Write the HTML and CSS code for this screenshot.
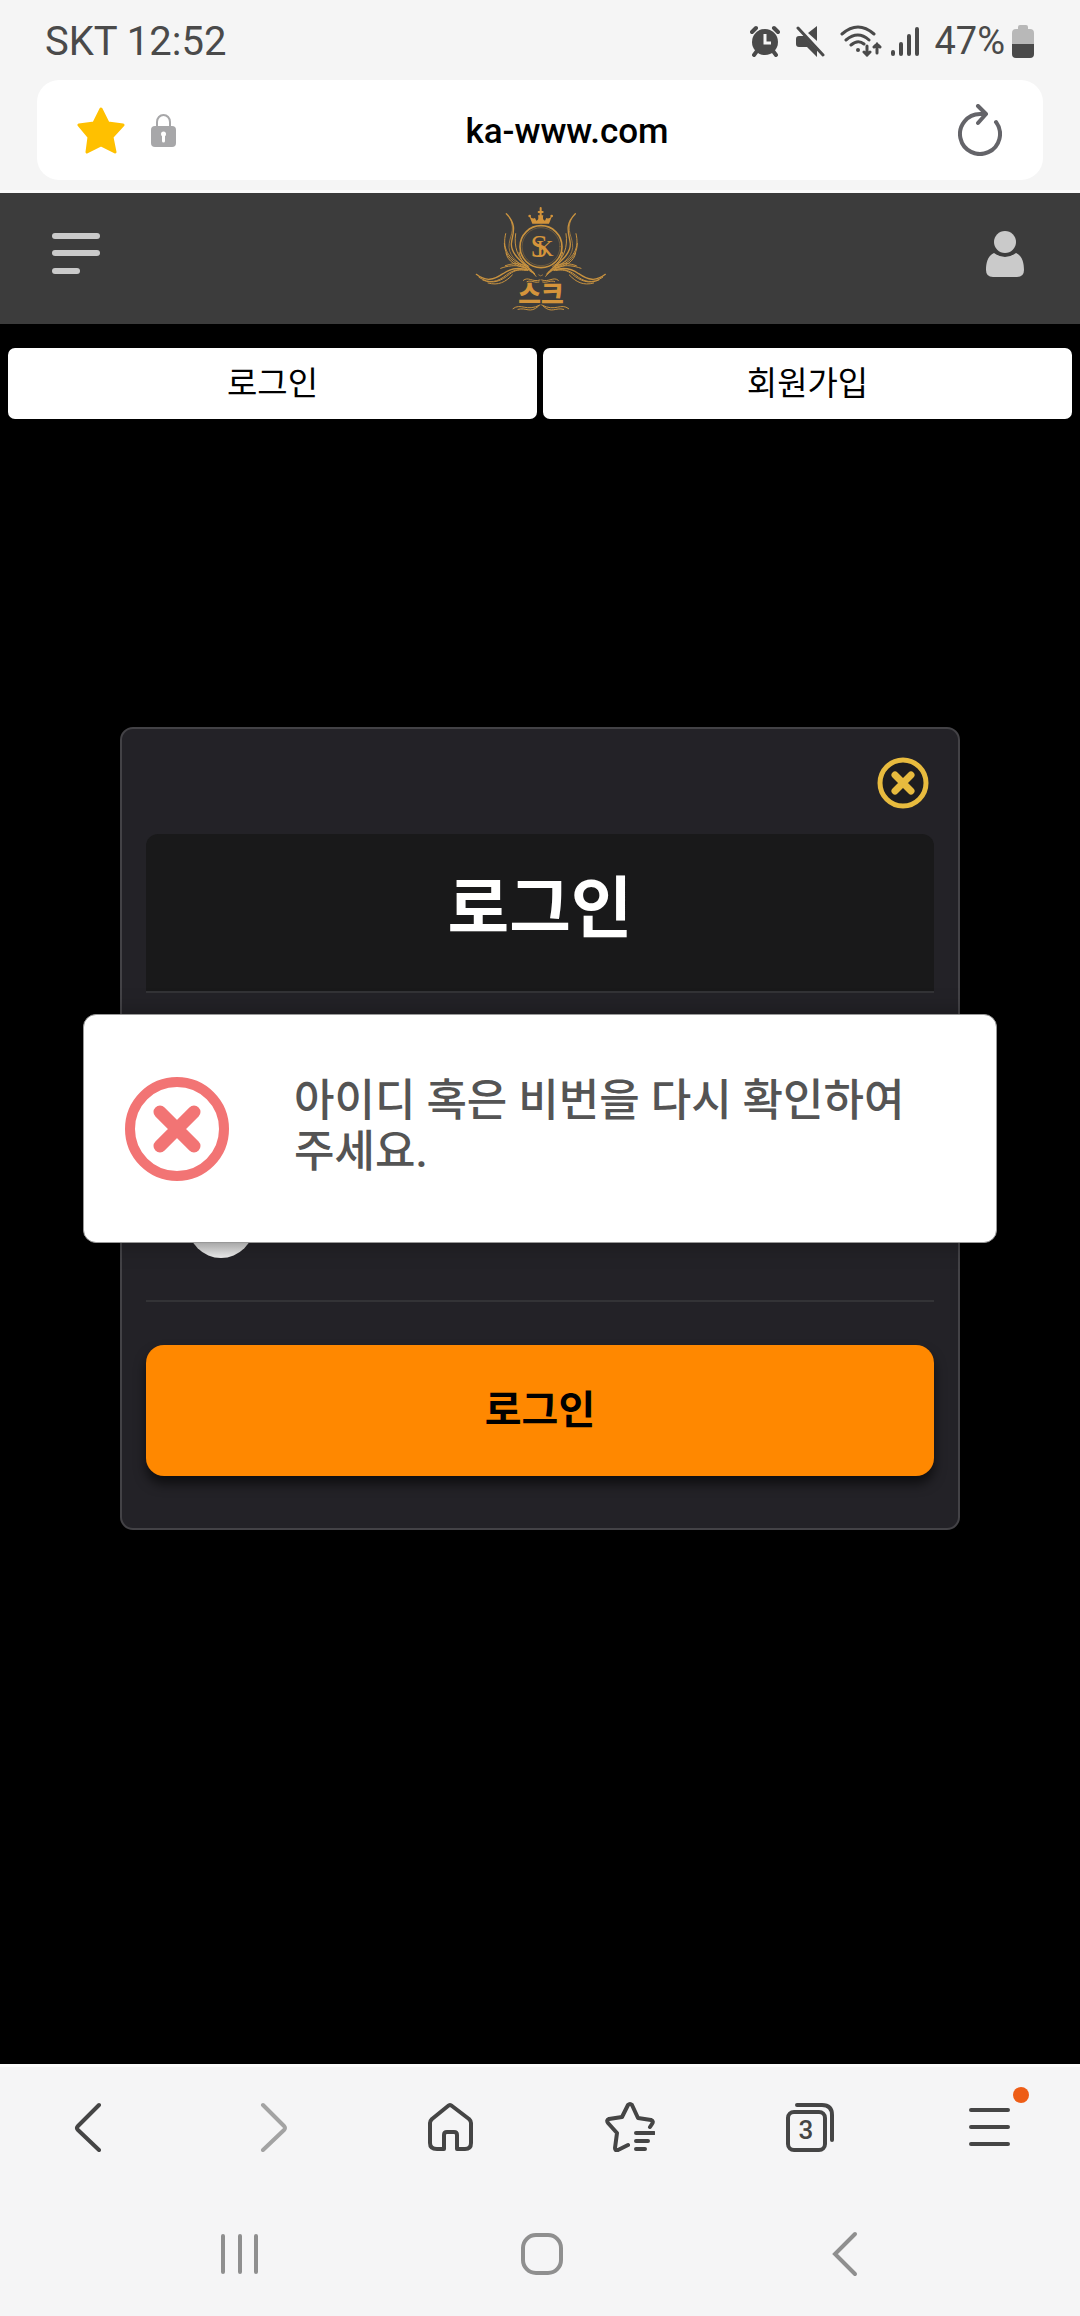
FILE: index.html
```html
<!DOCTYPE html>
<html lang="ko">
<head>
  <meta charset="UTF-8">
  <meta name="viewport" content="width=device-width, initial-scale=1.0">
  <title>ka-www.com</title>
  <link rel="stylesheet" href="styles.css">
</head>
<body>
  <div class="browser-top">
    <div class="status-bar">
      <span class="clock">SKT 12:52</span>
      <div class="status-icons">
        <!-- Alarm -->
        <svg width="30" height="32" viewBox="0 0 30 32" fill="none" stroke="#4a4a4a">
          <circle cx="15" cy="17" r="13" fill="#4a4a4a" stroke="none"/>
          <path d="M2 7l4-4M28 7l-4-4M4 30l3-4M26 30l-3-4" stroke-width="4" stroke-linecap="round"/>
          <path d="M15 9v9h6" stroke="#f5f5f5" stroke-width="3"/>
        </svg>
        <!-- Mute -->
        <svg width="30" height="32" viewBox="0 0 30 32" fill="#4a4a4a">
          <path d="M4 11h5l13 14v7l-10-10H4a3 3 0 0 1-3-3v-5a3 3 0 0 1 3-3zM13 8l9-7v15z"/>
          <path d="M3 3l25 27" stroke="#4a4a4a" stroke-width="3" stroke-linecap="round"/>
        </svg>
        <!-- Wifi -->
        <svg class="wifi" width="42" height="32" viewBox="0 0 42 32" fill="none" stroke="#4a4a4a" stroke-width="3" stroke-linecap="round">
          <path d="M2 9Q18-5 34 9M6 15q12-10 23 0M11 20q7-6 13-1"/>
          <circle cx="18" cy="25" r="2" fill="#4a4a4a" stroke="none"/>
          <path d="M27 21v9M24 27l3 3 3-3M37 28v-9M34 22l3-3 3 3" stroke-width="3"/>
        </svg>
        <!-- Signal -->
        <svg width="28" height="32" viewBox="0 0 28 32" stroke="#4a4a4a" stroke-width="4" stroke-linecap="round">
          <path d="M2 27v2M10 19v10M18 11v18M26 4v25"/>
        </svg>
        <span class="battery-text">47%</span>
        <!-- Battery -->
        <svg width="22" height="34" viewBox="0 0 22 34">
          <path d="M6 5V3q0-2 2-2h6q2 0 2 2v2h2q4 0 4 4v12H0V9q0-4 4-4z" fill="#b8b8b8"/>
          <path d="M0 20h22v10q0 4-4 4H4q-4 0-4-4z" fill="#4a4a4a"/>
        </svg>
      </div>
    </div>

    <div class="address-bar">
      <button class="icon-btn" aria-label="즐겨찾기">
        <svg width="48" height="48" viewBox="0 0 48 48">
          <path d="M24 3l7 14 15 2-11 12 3 15-14-7-14 7 2-15L2 19l15-2z" fill="#ffc000" stroke="#ffc000" stroke-width="3" stroke-linejoin="round"/>
        </svg>
      </button>
      <svg width="25" height="34" viewBox="0 0 25 34">
        <path d="M6 15V9a6.500 7 0 0 1 13 0v6" fill="none" stroke="#a7a7a9" stroke-width="2"/>
        <rect x="0" y="13" width="25" height="21" rx="4" fill="#a7a7a9"/>
        <circle cx="12.500" cy="21" r="2.500" fill="#fff"/>
        <path d="M12.500 21v7" stroke="#fff" stroke-width="3" stroke-linecap="round"/>
      </svg>
      <span class="url">ka-www.com</span>
      <button class="icon-btn" aria-label="새로고침">
        <svg width="44" height="52" viewBox="0 0 44 52" fill="none" stroke="#646469" stroke-width="4" stroke-linecap="round" stroke-linejoin="round">
          <path d="M38 18A20 20 0 1 1 22 10L28 10M20 2l8 8-8 9"/>
        </svg>
      </button>
    </div>
  </div>

  <div class="page">
    <header class="site-header">
      <button class="icon-btn" aria-label="메뉴">
        <svg width="48" height="42" viewBox="0 0 48 42" fill="#cacaca">
          <rect width="48" height="6" rx="3"/>
          <rect y="17" width="48" height="6" rx="3"/>
          <rect y="35" width="28" height="6" rx="3"/>
        </svg>
      </button>
      <a href="#" class="logo" aria-label="스크">
        <svg width="160" height="125" viewBox="0 0 480 375" fill="none" stroke="#c8923f" stroke-linecap="round">
          <!-- Crown -->
          <path d="M217 83l-10-25q9 13 18 8l4 8q9-2 5-16h16q-4 14 5 16l4-8q9 5 18-8l-10 25z" fill="#d4943b" stroke="none"/>
          <path d="M242 36v38M236 48h12" stroke="#d4943b" stroke-width="6"/>
          <circle cx="209" cy="60" r="4" fill="#d4943b" stroke="none"/>
          <circle cx="275" cy="60" r="4" fill="#d4943b" stroke="none"/>
          <!-- Ring -->
          <circle cx="243" cy="152" r="63" stroke-width="5"/>
          <circle cx="243" cy="152" r="57" stroke-width="1"/>
          <text class="logo-mark" x="211" y="184">S<tspan class="logo-k" dx="-36" dy="-4">K</tspan></text>
          <!-- Wings -->
          <g id="wing" stroke-width="4">
            <path d="M139 53c36 36 17 63 15 91 0 35 36 55 70 91"/>
            <path d="M151 68c17 40-5 52-4 87 4 32 30 46 68 74" stroke-width="2"/>
            <path d="M137 113c-10 41 2 76 63 99M133 142c0 38 26 61 66 73M138 171c5 26 30 39 60 46" stroke-width="3"/>
            <path d="M167 113c-6 39 5 76 40 99M177 169c4 22 18 36 31 49" stroke-width="3"/>
            <path d="M122 217c45-17 84-6 106 24M136 209c40-14 66-4 88 24" stroke-width="3"/>
            <path d="M49 235c29 23 52 17 80-2 25-18 49-19 74-11"/>
            <path d="M57 244c32 21 56 14 82-7 20-16 39-19 64-14M68 252c31 14 57 2 80-17 16-13 31-15 48-12M84 261c31 9 53-3 73-24" stroke-width="3"/>
            <path d="M190 253c15-13 27 7 50-1M201 257c12-6 23 5 36 1M159 338c24-19 39 11 81-11M174 340c26-7 35 14 61-9" stroke-width="3"/>
          </g>
          <use href="#wing" transform="matrix(-1 0 0 1 485 0)"/>
          <path d="M236 237q6 6 12 0" stroke-width="2"/>
          <text class="logo-name" x="243" y="322" text-anchor="middle">스크</text>
        </svg>
      </a>
      <button class="icon-btn" aria-label="내 정보">
        <svg width="38" height="46" viewBox="0 0 38 46" fill="#cacaca">
          <ellipse cx="19" cy="11" rx="11" ry="11"/>
          <path d="M8 22q11 8 22 0c6 3 8 9 8 17q0 7-7 7H7q-7 0-7-7c0-8 2-14 8-17z"/>
        </svg>
      </button>
    </header>

    <nav class="member-links">
      <a href="#">로그인</a>
      <a href="#">회원가입</a>
    </nav>

    <div class="overlay">
      <form class="login-modal">
        <button type="button" class="icon-btn close-btn" aria-label="닫기">
          <svg width="52" height="52" viewBox="0 0 52 52" fill="none" stroke="#e8bb3e">
            <circle cx="26" cy="26" r="23" fill="#1e1d1f" stroke-width="5"/>
            <path d="M18 18l16 16M34 18L18 34" stroke-width="7" stroke-linecap="round"/>
          </svg>
        </button>
        <h1>로그인</h1>
        <div class="login-fields">
          <input type="checkbox" class="save-check" aria-label="아이디 저장">
        </div>
        <button type="button" class="login-btn">로그인</button>
      </form>
    </div>

    <div class="overlay">
      <div class="toast" role="alert">
        <svg width="106" height="106" viewBox="0 0 106 106" fill="none" stroke="#f27474">
          <circle cx="53" cy="53" r="47" stroke-width="10"/>
          <path d="M36 36l34 34M70 36L36 70" stroke-width="13" stroke-linecap="round"/>
        </svg>
        <p>아이디 혹은 비번을 다시 확인하여 주세요.</p>
      </div>
    </div>
  </div>

  <div class="browser-bottom">
    <nav class="toolbar">
      <button class="icon-btn" aria-label="이전">
        <svg width="50" height="50" viewBox="0 0 50 50"><path d="M34 3L13 24q-2 2 0 4l21 20"/></svg>
      </button>
      <button class="icon-btn" aria-label="다음" disabled>
        <svg width="50" height="50" viewBox="0 0 50 50"><path d="M18 3l21 21q2 2 0 4L18 48"/></svg>
      </button>
      <button class="icon-btn" aria-label="홈">
        <svg width="50" height="50" viewBox="0 0 50 50" stroke-linejoin="round">
          <path d="M23 4q2-2 4 0l17 13q2 2 2 4v20q0 6-6 6h-8V33q0-3-3-3h-7q-3 0-3 3v14h-7q-7 0-7-6V21q0-2 2-4z"/>
        </svg>
      </button>
      <button class="icon-btn" aria-label="북마크">
        <svg width="50" height="50" viewBox="0 0 50 50" stroke-linejoin="round">
          <path d="M23 43l-10 5q-3 1-3-2l2-15L3 21q-2-3 1-4l13-2 6-12q2-2 4 0l6 13 13 2q3 1 1 4l-2 3M31 31h18M31 39h12M31 47h9"/>
        </svg>
      </button>
      <button class="icon-btn tabs-btn" aria-label="탭">
        <svg width="50" height="50" viewBox="0 0 50 50">
          <rect x="3" y="10" width="37" height="38" rx="6"/>
          <path d="M12 3h25q10 0 10 10v25"/>
        </svg>
        <span class="tab-count">3</span>
      </button>
      <button class="icon-btn menu-btn" aria-label="더보기">
        <svg width="50" height="50" viewBox="0 0 50 50"><path d="M6 8h37M6 25h37M6 42h37"/></svg>
        <span class="menu-dot"></span>
      </button>
    </nav>
    <nav class="system-nav">
      <button class="icon-btn" aria-label="최근 앱">
        <svg width="50" height="50" viewBox="0 0 50 50"><path d="M8 7v36M25 7v36M41 7v36"/></svg>
      </button>
      <button class="icon-btn" aria-label="홈 화면">
        <svg width="50" height="50" viewBox="0 0 50 50"><rect x="8" y="6" width="38" height="38" rx="13"/></svg>
      </button>
      <button class="icon-btn" aria-label="뒤로">
        <svg width="50" height="50" viewBox="0 0 50 50"><path d="M40 5L20 25l20 20"/></svg>
      </button>
    </nav>
  </div>
</body>
</html>
```

FILE: styles.css
```css
* {
  box-sizing: border-box;
}

body {
  margin: 0;
  min-height: 100vh;
  display: flex;
  flex-direction: column;
  background: #000;
  font-family: Roboto, 'Noto Sans CJK KR', sans-serif;
}

svg {
  display: block;
  flex-shrink: 0;
}

.icon-btn {
  padding: 0;
  border: none;
  background: none;
  cursor: pointer;
}

/* Status bar and address bar */
.browser-top {
  background: #f5f5f5;
  border-bottom: 3px solid #fcfcfc;
  padding-bottom: 10px;
}

.status-bar {
  display: flex;
  justify-content: space-between;
  align-items: center;
  height: 80px;
  padding: 2px 46px 0 45px;
  color: #4a4a4a;
}

.clock {
  font-size: 40px;
}

.status-icons {
  display: flex;
  align-items: center;
  gap: 15px;
}

.wifi {
  margin-right: -6px;
}

.battery-text {
  font-size: 38px;
  margin-right: -8px;
}

.address-bar {
  display: flex;
  align-items: center;
  gap: 26px;
  min-height: 100px;
  margin: 0 37px;
  padding: 0 41px 0 40px;
  border-radius: 22px;
  background: #fff;
}

.url {
  flex: 1;
  padding-top: 2px;
  text-align: center;
  font-size: 35px;
  font-weight: 500;
  color: #000;
}

/* Site */
.page {
  flex: 1;
  position: relative;
}

.site-header {
  display: flex;
  justify-content: space-between;
  align-items: center;
  height: 131px;
  padding: 0 56px 0 52px;
  background: #3c3c3c;
}

.site-header .icon-btn {
  padding-bottom: 10px;
}

.logo {
  margin-right: 6px;
}

.logo-mark {
  fill: #d4943b;
  stroke: none;
  font-family: 'Liberation Serif', serif;
  font-size: 96px;
}

.logo-k {
  font-size: 72px;
}

.logo-name {
  fill: #d4943b;
  stroke: none;
  font-family: 'Noto Sans CJK KR', sans-serif;
  font-size: 74px;
  font-weight: 900;
}

.member-links {
  display: flex;
  gap: 6px;
  padding: 24px 8px;
}

.member-links a {
  flex: 1;
  border-radius: 7px;
  background: #fff;
  color: #000;
  font-size: 33px;
  line-height: 71px;
  text-align: center;
  text-decoration: none;
}

.overlay {
  position: absolute;
  inset: 0;
  display: flex;
  justify-content: center;
  align-items: center;
}

/* Login modal */
.login-modal {
  display: flex;
  flex-direction: column;
  width: calc(100% - 240px);
  padding: 28px 24px 52px;
  border: 2px solid #434246;
  border-radius: 13px;
  background: #232227;
}

.close-btn {
  align-self: flex-end;
  margin-right: 5px;
}

.login-modal h1 {
  margin: 25px 0 0;
  padding: 28px 0 34px;
  border-bottom: 2px solid #333336;
  border-radius: 12px 12px 0 0;
  background: #19191a;
  color: #fff;
  font-size: 67px;
  line-height: 95px;
  text-align: center;
}

.login-fields {
  display: flex;
  align-items: flex-end;
  min-height: 309px;
  padding: 0 0 42px 42px;
  border-bottom: 2px solid #333336;
}

.save-check {
  appearance: none;
  width: 66px;
  height: 66px;
  margin: 0;
  border-radius: 50%;
  background: linear-gradient(#bbb 70%, #eee);
}

.login-btn {
  height: 131px;
  margin-top: 43px;
  padding: 0 0 8px;
  border: none;
  border-radius: 18px;
  background: #ff8800;
  box-shadow: 0 8px 12px rgba(0, 0, 0, 0.6);
  color: #000;
  font-family: inherit;
  font-size: 40px;
  font-weight: 700;
}

/* Error toast */
.toast {
  display: flex;
  align-items: center;
  gap: 64px;
  width: calc(100% - 166px);
  min-height: 229px;
  padding: 0 40px;
  border: 1px solid #999;
  border-radius: 13px;
  background: #fff;
  box-shadow: 0 0 24px rgba(0, 0, 0, 0.3);
}

.toast p {
  margin: 0;
  padding-bottom: 4px;
  color: #545454;
  font-size: 44px;
  font-weight: 500;
  line-height: 51px;
  word-break: keep-all;
}

/* Bottom bars */
.browser-bottom {
  background: #f5f5f6;
  border-top: 3px solid #fcfcfc;
}

.toolbar,
.system-nav {
  display: flex;
}

.toolbar {
  height: 119px;
}

.system-nav {
  height: 130px;
  padding: 6px 90px 0;
}

.toolbar .icon-btn,
.system-nav .icon-btn {
  flex: 1;
  display: flex;
  justify-content: center;
  align-items: center;
}

.toolbar svg {
  fill: none;
  stroke: #454545;
  stroke-width: 4;
  stroke-linecap: round;
}

.toolbar .icon-btn:disabled svg {
  stroke: #a3a3a3;
}

.system-nav svg {
  fill: none;
  stroke: #8f8f8f;
  stroke-width: 4;
  stroke-linecap: round;
}

.tabs-btn,
.menu-btn {
  position: relative;
}

.tab-count {
  position: absolute;
  left: 0;
  right: 8px;
  color: #454545;
  font-family: Roboto, sans-serif;
  font-size: 26px;
  font-weight: 500;
  line-height: 30px;
  padding-top: 6px;
}

.menu-dot {
  position: absolute;
  top: 20px;
  right: 51px;
  width: 16px;
  height: 16px;
  border-radius: 50%;
  background: #ee5d16;
}
```
